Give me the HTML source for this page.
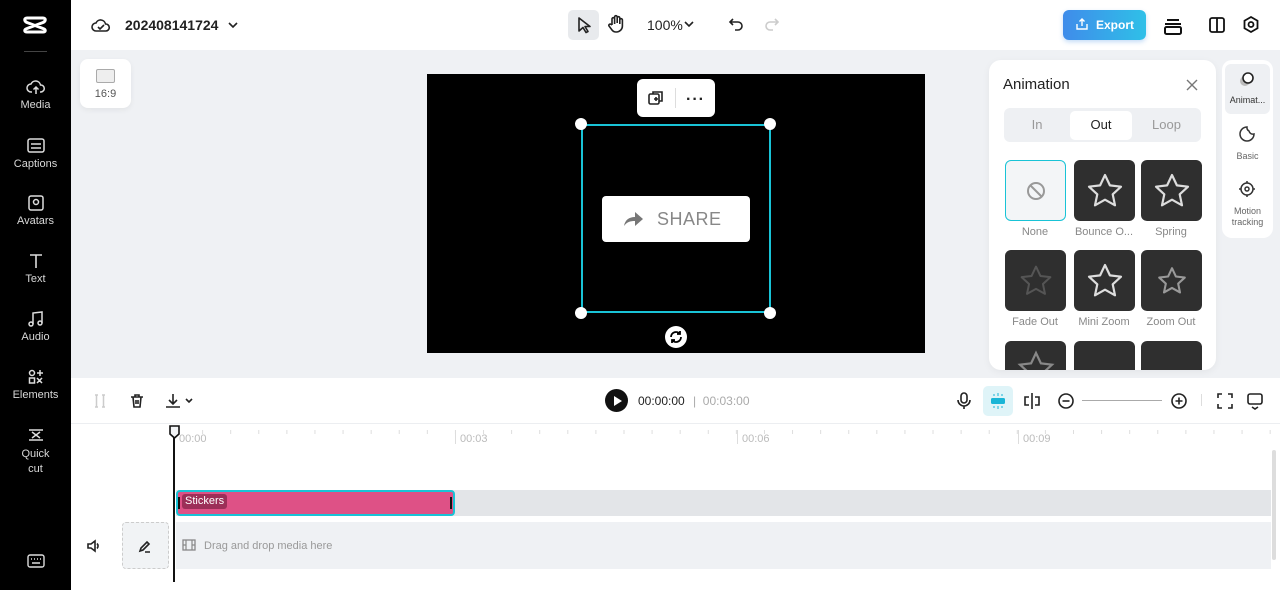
<!DOCTYPE html>
<html><head><meta charset="utf-8"><style>
*{box-sizing:border-box;margin:0;padding:0}
body{width:1280px;height:590px;overflow:hidden;font-family:"Liberation Sans",sans-serif;background:#fff;position:relative;color:#1f2329}
.a{position:absolute}
.side{left:0;top:0;width:71px;height:590px;background:#000}
.si{position:absolute;left:0;width:71px;text-align:center;color:#d8d8d8;font-size:11px}
.si svg{display:block;margin:0 auto 3px}
.canvas{left:71px;top:50px;width:1209px;height:328px;background:#eff1f4}
.star{width:61px;height:61px;border-radius:6px;background:#2f2f2f;display:flex;align-items:center;justify-content:center}
.lab{font-size:11px;color:#888;text-align:center;width:70px}
.ic{stroke:#222;fill:none;stroke-width:1.6}
</style></head><body>
<div class="a side"></div>
<svg class="a" style="left:22px;top:14px" width="26" height="22" viewBox="0 0 26 22"><path d="M5 4H21C24 4 24 7 21 8.5L5 14.5C2 15.5 2 18 5 18H21C24 18 24 15.5 21 14.5L5 8.5C2 7 2 4 5 4Z" stroke="#fff" stroke-width="3" fill="none" stroke-linejoin="round"/></svg>
<div class="a" style="left:24px;top:51px;width:23px;height:1px;background:#444"></div>
<div class="si" style="top:78px"><svg width="20" height="18" viewBox="0 0 20 18"><path d="M6 14H5a4 4 0 010-8 5 5 0 019.5 1A3.5 3.5 0 0115 14h-1M10 9v7M7.5 11.5L10 9l2.5 2.5" stroke="#ddd" fill="none" stroke-width="1.5"/></svg>Media</div>
<div class="si" style="top:137px"><svg width="20" height="18" viewBox="0 0 20 18"><rect x="2" y="2" width="16" height="13" rx="2" stroke="#ddd" fill="none" stroke-width="1.5"/><path d="M5 7h10M5 11h10" stroke="#ddd" stroke-width="1.5"/></svg>Captions</div>
<div class="si" style="top:194px"><svg width="20" height="18" viewBox="0 0 20 18"><rect x="3" y="2" width="14" height="14" rx="2" stroke="#ddd" fill="none" stroke-width="1.5"/><circle cx="10" cy="8" r="2.5" stroke="#ddd" fill="none" stroke-width="1.5"/></svg>Avatars</div>
<div class="si" style="top:252px"><svg width="20" height="18" viewBox="0 0 20 18"><path d="M4 3h12M10 3v13" stroke="#ddd" stroke-width="1.6"/></svg>Text</div>
<div class="si" style="top:310px"><svg width="20" height="18" viewBox="0 0 20 18"><path d="M7 14V3l9-1v11" stroke="#ddd" fill="none" stroke-width="1.5"/><circle cx="5" cy="14" r="2" stroke="#ddd" fill="none" stroke-width="1.5"/><circle cx="14" cy="13" r="2" stroke="#ddd" fill="none" stroke-width="1.5"/></svg>Audio</div>
<div class="si" style="top:368px"><svg width="20" height="18" viewBox="0 0 20 18"><circle cx="6" cy="5" r="2.5" stroke="#ddd" fill="none" stroke-width="1.5"/><rect x="3.5" y="10" width="5" height="5" stroke="#ddd" fill="none" stroke-width="1.5"/><path d="M14 2v6M11 5h6M11 10l5 5M16 10l-5 5" stroke="#ddd" stroke-width="1.5"/></svg>Elements</div>
<div class="si" style="top:426px;line-height:15px"><svg width="20" height="18" viewBox="0 0 20 18"><path d="M3 4h14M3 14h14M6 6l8 6M14 6l-8 6" stroke="#ddd" stroke-width="1.5"/></svg>Quick<br>cut</div>
<svg class="a" style="left:26px;top:553px" width="20" height="16" viewBox="0 0 20 16"><rect x="2" y="2" width="16" height="12" rx="2" stroke="#ddd" fill="none" stroke-width="1.4"/><path d="M5 6h1M8 6h1M11 6h1M14 6h1M6 10h8" stroke="#ddd" stroke-width="1.4"/></svg>
<div class="a" style="left:71px;top:272px;width:6px;height:48px;background:#2a2a2a;border-radius:0 4px 4px 0"></div>

<!-- top bar -->
<svg class="a" style="left:91px;top:16px" width="20" height="18" viewBox="0 0 20 18"><path d="M5 15a4 4 0 010-8 5 5 0 019.5 1A3.5 3.5 0 0115 15z" class="ic"/><path d="M7 11l2 2 4-4" class="ic"/></svg>
<div class="a" style="left:125px;top:17px;font-size:14px;font-weight:bold;color:#222">202408141724</div>
<svg class="a" style="left:227px;top:20px" width="12" height="10" viewBox="0 0 12 10"><path d="M2 3l4 4 4-4" class="ic"/></svg>
<div class="a" style="left:568px;top:10px;width:31px;height:30px;background:#e8eaed;border-radius:5px"></div>
<svg class="a" style="left:575px;top:15px" width="18" height="20" viewBox="0 0 18 20"><path d="M4 3v13l4-3.5 3 5 2-1-3-5h5z" class="ic" stroke-linejoin="round"/></svg>
<svg class="a" style="left:606px;top:14px" width="20" height="20" viewBox="0 0 20 20"><path d="M6 11V5a1.3 1.3 0 012.6 0v5M8.6 9V3a1.3 1.3 0 012.6 0v6M11.2 9V4a1.3 1.3 0 012.6 0v6M13.8 9V6a1.3 1.3 0 012.6 0v6a6 6 0 01-6 6H10a5 5 0 01-4-2l-3-4a1.3 1.3 0 012-1.6L6 11" class="ic" stroke-width="1.4"/></svg>
<div class="a" style="left:647px;top:17px;font-size:14px;color:#222">100%</div>
<svg class="a" style="left:683px;top:19px" width="12" height="10" viewBox="0 0 12 10"><path d="M2 3l4 4 4-4" class="ic"/></svg>
<svg class="a" style="left:726px;top:15px" width="20" height="20" viewBox="0 0 20 20"><path d="M7 4L4 7l3 3M4 7h8a4 4 0 010 8H9" class="ic"/></svg>
<svg class="a" style="left:762px;top:15px" width="20" height="20" viewBox="0 0 20 20"><path d="M13 4l3 3-3 3M16 7H8a4 4 0 000 8h3" stroke="#ccc" fill="none" stroke-width="1.6"/></svg>
<div class="a" style="left:1063px;top:10px;width:83px;height:30px;border-radius:6px;background:linear-gradient(90deg,#3f8cea,#2fc0e8);color:#fff;font-size:12px;font-weight:bold;line-height:30px;padding-left:33px;box-shadow:0 2px 5px rgba(60,140,230,.3)">Export</div>
<svg class="a" style="left:1075px;top:17px" width="14" height="14" viewBox="0 0 14 14"><path d="M7 9V2M4.5 4.5L7 2l2.5 2.5M2 7v5h10V7" stroke="#fff" fill="none" stroke-width="1.4"/></svg>
<svg class="a" style="left:1162px;top:15px" width="22" height="22" viewBox="0 0 22 22"><path d="M5 5h12M3 9h16" stroke="#111" stroke-width="2"/><rect x="3" y="12" width="16" height="7" rx="1.5" stroke="#111" fill="none" stroke-width="2"/></svg>
<svg class="a" style="left:1208px;top:16px" width="18" height="18" viewBox="0 0 18 18"><rect x="2" y="2" width="14" height="14" rx="2" stroke="#111" fill="none" stroke-width="1.8"/><path d="M9 2v14" stroke="#111" stroke-width="1.8"/></svg>
<svg class="a" style="left:1242px;top:15px" width="18" height="20" viewBox="0 0 18 20"><path d="M9 2l6.5 3.75v7.5L9 17l-6.5-3.75v-7.5z" stroke="#111" fill="none" stroke-width="1.8"/><circle cx="9" cy="9.5" r="2.5" stroke="#111" fill="none" stroke-width="1.8"/></svg>

<!-- canvas -->
<div class="a canvas"></div>
<div class="a" style="left:80px;top:59px;width:51px;height:49px;background:#fff;border-radius:8px;box-shadow:0 2px 6px rgba(0,0,0,.06)"></div>
<div class="a" style="left:96px;top:69px;width:19px;height:14px;border:1.5px solid #aaa;border-radius:2px;background:#eee"></div>
<div class="a" style="left:80px;top:88px;width:51px;text-align:center;font-size:11px;color:#555">16:9</div>
<div class="a" style="left:427px;top:74px;width:498px;height:279px;background:#000"></div>
<div class="a" style="left:637px;top:79px;width:78px;height:38px;background:#fff;border-radius:6px"></div>
<svg class="a" style="left:647px;top:89px" width="18" height="18" viewBox="0 0 18 18"><rect x="2" y="5" width="10" height="10" rx="1.5" class="ic"/><path d="M6 5V3h9v9h-3M7 10h4M9 8v4" class="ic"/></svg>
<div class="a" style="left:675px;top:88px;width:1px;height:20px;background:#ddd"></div>
<div class="a" style="left:686px;top:91px;font-size:16px;font-weight:bold;letter-spacing:1px;color:#222">···</div>
<div class="a" style="left:581px;top:124px;width:190px;height:189px;border:2px solid #19c3d6"></div>
<div class="a" style="left:575px;top:118px;width:12px;height:12px;border-radius:50%;background:#fff"></div>
<div class="a" style="left:764px;top:118px;width:12px;height:12px;border-radius:50%;background:#fff"></div>
<div class="a" style="left:575px;top:307px;width:12px;height:12px;border-radius:50%;background:#fff"></div>
<div class="a" style="left:764px;top:307px;width:12px;height:12px;border-radius:50%;background:#fff"></div>
<div class="a" style="left:602px;top:196px;width:148px;height:46px;background:#fff;border-radius:4px;color:#888;font-size:18px;line-height:46px;padding-left:55px;letter-spacing:.5px">SHARE</div>
<svg class="a" style="left:622px;top:209px" width="22" height="20" viewBox="0 0 22 20"><path d="M2 17c1-6 5-9 11-9V3l8 7-8 7v-5c-5 0-8 1-11 5z" fill="#777"/></svg>
<div class="a" style="left:665px;top:326px;width:22px;height:22px;border-radius:50%;background:#fff"></div>
<svg class="a" style="left:668px;top:329px" width="16" height="16" viewBox="0 0 16 16"><path d="M3 8a5 5 0 019-3M13 8a5 5 0 01-9 3M12 2v3H9M4 14v-3h3" stroke="#000" fill="none" stroke-width="1.8"/></svg>

<!-- animation panel -->
<div class="a" style="left:989px;top:60px;width:227px;height:310px;background:#fff;border-radius:12px;box-shadow:0 2px 8px rgba(0,0,0,.05);overflow:hidden">
 <div class="a" style="left:14px;top:16px;font-size:15px;color:#222">Animation</div>
 <svg class="a" style="left:196px;top:18px" width="14" height="14" viewBox="0 0 14 14"><path d="M2 2l10 10M12 2L2 12" stroke="#777" stroke-width="1.4"/></svg>
 <div class="a" style="left:15px;top:48px;width:197px;height:34px;background:#eef0f3;border-radius:6px"></div>
 <div class="a" style="left:81px;top:51px;width:62px;height:29px;background:#fff;border-radius:5px"></div>
 <div class="a" style="left:15px;top:57px;width:66px;text-align:center;font-size:13px;color:#999">In</div>
 <div class="a" style="left:81px;top:57px;width:62px;text-align:center;font-size:13px;color:#222">Out</div>
 <div class="a" style="left:143px;top:57px;width:69px;text-align:center;font-size:13px;color:#999">Loop</div>
 <div class="a" style="left:16px;top:100px;width:61px;height:61px;border:1.5px solid #19c3d6;border-radius:6px;background:#f3f5f7;display:flex;align-items:center;justify-content:center"><svg width="22" height="22" viewBox="0 0 22 22"><circle cx="11" cy="11" r="8" stroke="#999" fill="none" stroke-width="2"/><path d="M5.5 5.5l11 11" stroke="#999" stroke-width="2"/></svg></div>
 <div class="a star" style="left:85px;top:100px"><svg width="40" height="40" viewBox="0 0 40 40"><path d="M20 4l4.9 10.4 11.1 1.3-8.3 7.6 2.3 11-10-5.6-10 5.6 2.3-11-8.3-7.6 11.1-1.3z" stroke="#ddd" fill="none" stroke-width="2.2" stroke-linejoin="round"/></svg></div>
 <div class="a star" style="left:152px;top:100px"><svg width="40" height="40" viewBox="0 0 40 40"><path d="M20 4l4.9 10.4 11.1 1.3-8.3 7.6 2.3 11-10-5.6-10 5.6 2.3-11-8.3-7.6 11.1-1.3z" stroke="#ddd" fill="none" stroke-width="2.2" stroke-linejoin="round"/></svg></div>
 <div class="a lab" style="left:11px;top:166px">None</div>
 <div class="a lab" style="left:80px;top:166px">Bounce O...</div>
 <div class="a lab" style="left:147px;top:166px">Spring</div>
 <div class="a star" style="left:16px;top:190px"><svg width="36" height="36" viewBox="0 0 40 40"><path d="M20 4l4.9 10.4 11.1 1.3-8.3 7.6 2.3 11-10-5.6-10 5.6 2.3-11-8.3-7.6 11.1-1.3z" stroke="#555" fill="none" stroke-width="2.2" stroke-linejoin="round"/></svg></div>
 <div class="a star" style="left:85px;top:190px"><svg width="40" height="40" viewBox="0 0 40 40"><path d="M20 4l4.9 10.4 11.1 1.3-8.3 7.6 2.3 11-10-5.6-10 5.6 2.3-11-8.3-7.6 11.1-1.3z" stroke="#ddd" fill="none" stroke-width="2.2" stroke-linejoin="round"/></svg></div>
 <div class="a star" style="left:152px;top:190px"><svg width="32" height="32" viewBox="0 0 40 40"><path d="M20 4l4.9 10.4 11.1 1.3-8.3 7.6 2.3 11-10-5.6-10 5.6 2.3-11-8.3-7.6 11.1-1.3z" stroke="#999" fill="none" stroke-width="2.6" stroke-linejoin="round"/></svg></div>
 <div class="a lab" style="left:11px;top:256px">Fade Out</div>
 <div class="a lab" style="left:80px;top:256px">Mini Zoom</div>
 <div class="a lab" style="left:147px;top:256px">Zoom Out</div>
 <div class="a star" style="left:16px;top:281px;align-items:flex-start;padding-top:8px"><svg width="40" height="40" viewBox="0 0 40 40"><path d="M20 4l4.9 10.4 11.1 1.3-8.3 7.6 2.3 11-10-5.6-10 5.6 2.3-11-8.3-7.6 11.1-1.3z" stroke="#888" fill="none" stroke-width="2.2"/></svg></div>
 <div class="a star" style="left:85px;top:281px"></div>
 <div class="a star" style="left:152px;top:281px"></div>
</div>
<div class="a" style="left:1222px;top:60px;width:51px;height:178px;background:#fff;border-radius:10px"></div>
<div class="a" style="left:1225px;top:64px;width:45px;height:50px;background:#eef0f3;border-radius:6px"></div>
<svg class="a" style="left:1237px;top:70px" width="20" height="20" viewBox="0 0 20 20"><circle cx="8" cy="11" r="5" fill="#bbb"/><circle cx="11" cy="8" r="5" stroke="#222" fill="#fff" stroke-width="1.6"/></svg>
<div class="a" style="left:1222px;top:95px;width:51px;text-align:center;font-size:9px;color:#333">Animat...</div>
<svg class="a" style="left:1238px;top:125px" width="18" height="18" viewBox="0 0 18 18"><path d="M9 2a7 7 0 107 7 4 4 0 01-5-3 4 4 0 01-2-4z" stroke="#333" fill="none" stroke-width="1.5"/></svg>
<div class="a" style="left:1222px;top:151px;width:51px;text-align:center;font-size:9px;color:#666">Basic</div>
<svg class="a" style="left:1238px;top:180px" width="18" height="18" viewBox="0 0 18 18"><circle cx="9" cy="9" r="6" stroke="#333" fill="none" stroke-width="1.5"/><circle cx="9" cy="9" r="2" stroke="#333" fill="none" stroke-width="1.5"/><path d="M9 1v2M9 15v2M1 9h2M15 9h2" stroke="#333" stroke-width="1.5"/></svg>
<div class="a" style="left:1222px;top:206px;width:51px;text-align:center;font-size:9px;color:#666;line-height:11px">Motion<br>tracking</div>

<!-- toolbar -->
<div class="a" style="left:71px;top:423px;width:1209px;height:1px;background:#eceef1"></div>
<svg class="a" style="left:91px;top:392px" width="18" height="18" viewBox="0 0 18 18"><path d="M4 3h3M4 15h3M11 3h3M11 15h3M5.5 3v12M12.5 3v12" stroke="#ccc" stroke-width="1.5"/></svg>
<svg class="a" style="left:128px;top:392px" width="18" height="18" viewBox="0 0 18 18"><path d="M3 5h12M7 5V3h4v2M5 5l1 10h6l1-10M8 8v4M10 8v4" class="ic" stroke-width="1.5"/></svg>
<svg class="a" style="left:164px;top:392px" width="32" height="18" viewBox="0 0 32 18"><path d="M9 2v10M5 8l4 4 4-4M2 15h14M22 7l3 3 3-3" class="ic" stroke-width="1.5"/></svg>
<div class="a" style="left:605px;top:389px;width:23px;height:23px;border-radius:50%;background:#111"></div>
<svg class="a" style="left:613px;top:396px" width="9" height="10" viewBox="0 0 9 10"><path d="M1 0l8 5-8 5z" fill="#fff"/></svg>
<div class="a" style="left:638px;top:394px;font-size:12px;color:#222">00:00:00</div>
<div class="a" style="left:693px;top:394px;font-size:12px;color:#aaa">|&nbsp; 00:03:00</div>
<svg class="a" style="left:954px;top:391px" width="20" height="20" viewBox="0 0 20 20"><rect x="7" y="2" width="6" height="10" rx="3" class="ic"/><path d="M4 9a6 6 0 0012 0M10 15v3" class="ic"/></svg>
<div class="a" style="left:983px;top:386px;width:30px;height:30px;background:#dff4f8;border-radius:5px"></div>
<svg class="a" style="left:988px;top:391px" width="20" height="20" viewBox="0 0 20 20"><rect x="3" y="7" width="14" height="6" rx="1.5" fill="#1ab5d6"/><path d="M10 2v3M10 15v3M6 3v2M14 3v2M6 15v2M14 15v2" stroke="#1ab5d6" stroke-width="1"/></svg>
<svg class="a" style="left:1022px;top:391px" width="20" height="20" viewBox="0 0 20 20"><path d="M10 2v16M7 6H3v8h4M13 6h4v8h-4" class="ic"/></svg>
<svg class="a" style="left:1056px;top:391px" width="20" height="20" viewBox="0 0 20 20"><circle cx="10" cy="10" r="7" class="ic"/><path d="M6.5 10h7" class="ic"/></svg>
<div class="a" style="left:1082px;top:400px;width:80px;height:1px;background:#aaa"></div>
<svg class="a" style="left:1169px;top:391px" width="20" height="20" viewBox="0 0 20 20"><circle cx="10" cy="10" r="7" class="ic"/><path d="M6.5 10h7M10 6.5v7" class="ic"/></svg>
<div class="a" style="left:1201px;top:394px;width:1px;height:12px;background:#ddd"></div>
<svg class="a" style="left:1215px;top:391px" width="20" height="20" viewBox="0 0 20 20"><path d="M3 7V3h4M13 3h4v4M17 13v4h-4M7 17H3v-4" class="ic" stroke-width="1.8"/></svg>
<svg class="a" style="left:1245px;top:391px" width="20" height="20" viewBox="0 0 20 20"><rect x="3" y="3" width="14" height="10" rx="2" class="ic"/><path d="M7 16l3 2 3-2" class="ic"/></svg>

<!-- timeline -->
<div class="a" style="left:174px;top:430px;width:1100px;height:14px;background:repeating-linear-gradient(90deg,#ddd 0 1px,transparent 1px 28.1px);background-size:28.1px 4px;background-repeat:repeat-x"></div>
<div class="a" style="left:455px;top:430px;width:1px;height:14px;background:#ddd"></div>
<div class="a" style="left:737px;top:430px;width:1px;height:14px;background:#ddd"></div>
<div class="a" style="left:1018px;top:430px;width:1px;height:14px;background:#ddd"></div>
<div class="a" style="left:179px;top:433px;font-size:11px;color:#bbb">00:00</div>
<div class="a" style="left:460px;top:433px;font-size:11px;color:#bbb">00:03</div>
<div class="a" style="left:742px;top:433px;font-size:11px;color:#bbb">00:06</div>
<div class="a" style="left:1023px;top:433px;font-size:11px;color:#bbb">00:09</div>
<div class="a" style="left:176px;top:490px;width:1095px;height:26px;background:#e3e5e8"></div>
<div class="a" style="left:176px;top:490px;width:279px;height:26px;background:#de5186;border:2px solid #19c3d6;border-radius:4px"></div>
<div class="a" style="left:178px;top:497px;width:2px;height:12px;background:#111"></div>
<div class="a" style="left:450px;top:497px;width:2px;height:12px;background:#111"></div>
<div class="a" style="left:182px;top:494px;height:15px;padding:0 3px;background:#9c2f58;border-radius:3px;color:#fff;font-size:11px;line-height:15px">Stickers</div>
<svg class="a" style="left:86px;top:538px" width="16" height="16" viewBox="0 0 16 16"><path d="M2 6h3l4-3v10l-4-3H2zM11 5.5a3.5 3.5 0 010 5" class="ic" stroke-width="1.4"/></svg>
<div class="a" style="left:122px;top:522px;width:47px;height:47px;background:#f1f3f5;border:1px dashed #ccc;border-radius:4px"></div>
<svg class="a" style="left:137px;top:538px" width="16" height="16" viewBox="0 0 16 16"><path d="M3 13l1-3 6-6 2 2-6 6zM8 14h5" class="ic" stroke-width="1.4"/></svg>
<div class="a" style="left:176px;top:522px;width:1095px;height:47px;background:#eff1f4"></div>
<svg class="a" style="left:182px;top:539px" width="14" height="13" viewBox="0 0 14 13"><rect x="1" y="1" width="12" height="10" stroke="#888" fill="none" stroke-width="1.3"/><path d="M4 1v10M10 1v10M1 6h3M10 6h3" stroke="#888" stroke-width="1.2"/></svg>
<div class="a" style="left:204px;top:540px;font-size:11px;color:#999">Drag and drop media here</div>
<div class="a" style="left:1272px;top:450px;width:4px;height:110px;background:#ddd;border-radius:2px"></div>
<div class="a" style="left:173px;top:436px;width:2px;height:146px;background:#111"></div>
<svg class="a" style="left:168px;top:424px" width="13" height="16" viewBox="0 0 13 16"><path d="M2 2h9v8l-4.5 4L2 10z" fill="#f2f4f6" stroke="#111" stroke-width="1.6"/></svg>
</body></html>
